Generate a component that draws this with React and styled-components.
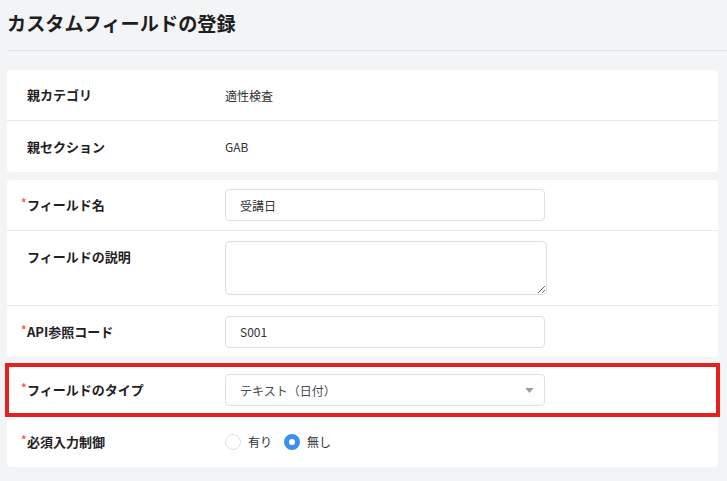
import React, { useState } from "react";
import styled, { createGlobalStyle, css } from "styled-components";

const GlobalStyle = createGlobalStyle`
  html, body {
    margin: 0;
    padding: 0;
    background: #f3f4f6;
    font-family: "Noto Sans CJK JP", "Noto Sans", sans-serif;
    color: #222;
    overflow: hidden;
  }
`;

const basicRows = [
  { label: "親カテゴリ", value: "適性検査" },
  { label: "親セクション", value: "GAB" },
];

const App = () => {
  const [required, setRequired] = useState("no");

  return (
    <Page>
      <GlobalStyle />
      <Header>
        <Title>カスタムフィールドの登録</Title>
      </Header>

      <Card>
        {basicRows.map((row) => (
          <Row key={row.label}>
            <Label>{row.label}</Label>
            <Value>{row.value}</Value>
          </Row>
        ))}
      </Card>

      <Card>
        <Row>
          <Label required>フィールド名</Label>
          <Input defaultValue="受講日" />
        </Row>
        <Row top>
          <Label top>フィールドの説明</Label>
          <TextArea />
        </Row>
        <Row>
          <Label required>API参照コード</Label>
          <Input defaultValue="S001" />
        </Row>
      </Card>

      <Card>
        <Row highlighted>
          <Label required>フィールドのタイプ</Label>
          <Select>
            <span>テキスト（日付）</span>
            <Caret viewBox="0 0 10 6">
              <path d="M0 0 L10 0 L5 6 Z" fill="#939dae" />
            </Caret>
          </Select>
        </Row>
        <Row>
          <Label required>必須入力制御</Label>
          <RadioGroup>
            <RadioOption onClick={() => setRequired("yes")}>
              <RadioDot checked={required === "yes"} />
              有り
            </RadioOption>
            <RadioOption onClick={() => setRequired("no")}>
              <RadioDot checked={required === "no"} />
              無し
            </RadioOption>
          </RadioGroup>
        </Row>
      </Card>
    </Page>
  );
};

const Page = styled.div`
  display: flex;
  flex-direction: column;
  gap: 8px;
  padding: 0 9px 14px 7px;
  min-height: 481px;
  box-sizing: border-box;
`;

const Header = styled.div`
  margin-right: -9px;
  padding: 10px 0 14px 0;
  border-bottom: 1px solid #dfe1e5;
  margin-bottom: 11px;
`;

const Title = styled.h1`
  margin: 0;
  font-size: 19.2px;
  line-height: 26px;
  font-weight: 700;
  color: #1c1e21;
`;

const Card = styled.div`
  background: #ffffff;
  border-radius: 4px;
  display: flex;
  flex-direction: column;
`;

const Row = styled.div`
  position: relative;
  box-sizing: border-box;
  display: flex;
  align-items: ${(p) => (p.top ? "flex-start" : "center")};
  min-height: 51px;
  padding: ${(p) => (p.top ? "10px" : "0")} 0 ${(p) => (p.top ? "10px" : "0")} 13px;
  border-bottom: 1px solid #e6e8eb;

  &:last-child {
    border-bottom: none;
  }

  ${(p) =>
    p.highlighted &&
    css`
      &::after {
        content: "";
        position: absolute;
        top: -2px;
        left: -2px;
        right: -2px;
        bottom: -2px;
        border: 4px solid #e61f1f;
        pointer-events: none;
      }
    `}
`;

const Label = styled.div`
  position: relative;
  width: 198px;
  padding-left: 7px;
  flex-shrink: 0;
  font-size: 13px;
  font-weight: 700;
  color: #1f2124;
  line-height: 20px;

  ${(p) => p.top && css`padding-top: 6px;`}

  &::before {
    content: ${(p) => (p.required ? '"*"' : '""')};
    position: absolute;
    left: 1px;
    top: -3px;
    color: #f0605a;
    font-size: 11px;
    font-weight: 700;
  }
`;

const Value = styled.div`
  font-size: 12px;
  color: #303133;
`;

const fieldBox = css`
  box-sizing: border-box;
  border: 1px solid #dde1e6;
  border-radius: 4px;
  background: #fff;
  font-family: inherit;
  font-size: 12px;
  color: #303133;
  outline: none;
`;

const Input = styled.input`
  ${fieldBox}
  width: 320px;
  height: 32px;
  padding: 0 14px;
`;

const TextArea = styled.textarea`
  ${fieldBox}
  width: 322px;
  height: 54px;
  padding: 6px 14px;
  resize: vertical;
  display: block;
`;

const Select = styled.div`
  ${fieldBox}
  width: 320px;
  height: 32px;
  padding: 0 10px 0 14px;
  display: flex;
  align-items: center;
  justify-content: space-between;
  color: #484b50;
`;

const Caret = styled.svg`
  width: 9px;
  height: 5px;
`;

const RadioGroup = styled.div`
  display: flex;
  align-items: center;
  gap: 12px;
`;

const RadioOption = styled.label`
  display: flex;
  align-items: center;
  gap: 7px;
  font-size: 12px;
  color: #303133;
  cursor: pointer;
`;

const RadioDot = styled.span`
  box-sizing: border-box;
  width: 16px;
  height: 16px;
  border-radius: 50%;
  background: #fff;
  border: ${(p) => (p.checked ? "5px solid #3f8ff0" : "1px solid #dcdfe6")};
`;

export default App;
